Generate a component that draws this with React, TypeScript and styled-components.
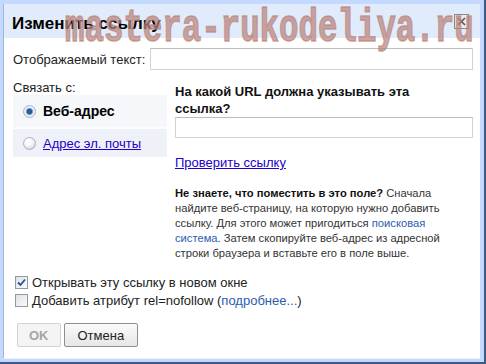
import styled, { createGlobalStyle } from 'styled-components'

const Global = createGlobalStyle`
  html, body {
    margin: 0;
    padding: 0;
    background: #ffffff;
  }
  body {
    font-family: "Liberation Sans", Arial, sans-serif;
    color: #222;
  }
`

const Frame = styled.div`
  width: 486px;
  height: 364px;
  box-sizing: border-box;
  background: #c3d9ff;
  border-right: 2px solid #3d5a80;
  border-bottom: 2px solid #3d5a80;
  padding: 4px 4px 3px 3px;
  display: flex;
`

const Dialog = styled.div`
  position: relative;
  flex: 1;
  display: flex;
  flex-direction: column;
  background: #fff;
  border-left: 1px solid #9fb4d6;
  border-bottom: 1px solid #eef3fb;
  overflow: hidden;
`

const TitleBar = styled.div`
  height: 34px;
  background: #e0ecfb;
  display: flex;
  align-items: center;
  justify-content: space-between;
  padding: 0 8px 0 8px;
`

const Title = styled.h1`
  margin: 0;
  font-size: 17px;
  font-weight: 700;
  color: #000;
  position: relative;
  top: 3px;
`

const CloseButton = styled.div`
  width: 13px;
  height: 13px;
  border: 1px solid #8a8a8a;
  background: #ececec;
  display: flex;
  align-items: center;
  justify-content: center;
  margin-right: 3px;
`

const Watermark = styled.div`
  position: absolute;
  left: 61px;
  top: -2px;
  font-family: "Liberation Mono", "DejaVu Sans Mono", monospace;
  font-weight: 700;
  font-size: 47px;
  color: rgba(186, 132, 124, 0.72);
  -webkit-text-stroke: 1.5px rgba(186, 132, 124, 0.72);
  transform: scaleX(0.69);
  transform-origin: left top;
  white-space: nowrap;
  pointer-events: none;
`

const Body = styled.div`
  flex: 1;
  display: flex;
  flex-direction: column;
  padding: 10px 7px 0 9px;
  font-size: 13px;
`

const FieldRow = styled.div`
  display: flex;
  align-items: center;
  gap: 5px;
`

const TextInput = styled.div`
  flex: 1;
  height: 20px;
  border: 1px solid #d3d3d3;
  border-top-color: #bdbdbd;
  background: #fff;
`

const Columns = styled.div`
  display: grid;
  grid-template-columns: 154px 1fr;
  column-gap: 6px;
  margin-top: 10px;
`

const LeftCol = styled.div`
  display: flex;
  flex-direction: column;
`

const Label = styled.div`
  color: #222;
  line-height: 15px;
`

const Tabs = styled.div`
  background: #eef2f8;
  display: flex;
  flex-direction: column;
`

const Tab = styled.div<{ $active?: boolean }>`
  height: ${({ $active }) => ($active ? 32 : 28)}px;
  display: flex;
  align-items: center;
  gap: 7px;
  padding-left: 10px;
  background: ${({ $active }) => ($active ? '#f5f7fb' : '#eef2f8')};
  border-bottom: ${({ $active }) => ($active ? '2px solid #fbfcfe' : 'none')};
  font-size: ${({ $active }) => ($active ? 14 : 13)}px;
  font-weight: ${({ $active }) => ($active ? 700 : 400)};
  color: #000;
`

const Radio = styled.span<{ $checked?: boolean }>`
  width: 11px;
  height: 11px;
  border-radius: 50%;
  border: 1px solid #a6b4c4;
  background: ${({ $checked }) =>
    $checked
      ? 'radial-gradient(circle at 50% 50%, #2b5c99 0 2.5px, #6f9bd0 3px, #e4e9ef 4px, #f8f8f8 6px)'
      : 'radial-gradient(circle at 40% 35%, #ffffff 0 2px, #e6e8ea 6px, #d4d7db 7px)'};
  flex: none;
`

const Link = styled.a`
  color: #2200cc;
  text-decoration: underline;
  cursor: pointer;
`

const SoftLink = styled.a`
  color: #2a5db0;
  text-decoration: none;
`

const RightCol = styled.div`
  display: flex;
  flex-direction: column;
  padding-top: 3px;
  padding-left: 2px;
`

const Question = styled.div`
  font-weight: 700;
  font-size: 13px;
  line-height: 17px;
  color: #111;
  max-width: 255px;
`

const UrlInput = styled(TextInput)`
  flex: none;
  height: 19px;
`

const CheckLink = styled.div`
  margin-top: 17px;
  font-size: 13px;
  line-height: 15px;
`

const Help = styled.p`
  margin: 16px 0 0;
  max-width: 274px;
  font-size: 11.2px;
  line-height: 15px;
  color: #333;
  b {
    color: #111;
  }
`

const Options = styled.div`
  display: flex;
  flex-direction: column;
  gap: 3px;
  margin-top: 14px;
  padding-left: 2px;
`

const Option = styled.label`
  display: flex;
  align-items: center;
  gap: 4px;
  height: 15px;
  font-size: 13px;
  color: #222;
`

const Box = styled.span`
  width: 11px;
  height: 11px;
  border: 1px solid #8e9aa8;
  background: linear-gradient(135deg, #dfe2e6, #fafafa);
  display: flex;
  align-items: center;
  justify-content: center;
  flex: none;
`

const Buttons = styled.div`
  display: flex;
  gap: 3px;
  margin-top: 15px;
  padding-left: 4px;
`

const Button = styled.div<{ $disabled?: boolean }>`
  height: 22px;
  padding: 0 ${({ $disabled }) => ($disabled ? 11 : 13)}px;
  border: 1px solid ${({ $disabled }) => ($disabled ? '#d2d2d2' : '#8f8f8f')};
  border-radius: 2px;
  background: ${({ $disabled }) =>
    $disabled ? '#f4f4f4' : 'linear-gradient(#fafafa, #e6e6e6)'};
  color: ${({ $disabled }) => ($disabled ? '#a6a6a6' : '#222')};
  font-weight: ${({ $disabled }) => ($disabled ? 700 : 400)};
  font-size: 13px;
  display: flex;
  align-items: center;
`

export default function App() {
  return (
    <>
      <Global />
      <Frame>
        <Dialog>
          <TitleBar>
            <Title>Изменить ссылку</Title>
            <CloseButton>
              <svg width="9" height="9" viewBox="0 0 9 9">
                <path d="M1 1L8 8M8 1L1 8" stroke="#555" strokeWidth="1.6" />
              </svg>
            </CloseButton>
          </TitleBar>
          <Watermark>mastera-rukodeliya.ru</Watermark>
          <Body>
            <FieldRow>
              <span>Отображаемый текст:</span>
              <TextInput />
            </FieldRow>
            <Columns>
              <LeftCol>
                <Label>Связать с:</Label>
                <Tabs>
                  <Tab $active>
                    <Radio $checked />
                    Веб-адрес
                  </Tab>
                  <Tab>
                    <Radio />
                    <Link>Адрес эл. почты</Link>
                  </Tab>
                </Tabs>
              </LeftCol>
              <RightCol>
                <Question>На какой URL должна указывать эта ссылка?</Question>
                <UrlInput />
                <CheckLink>
                  <Link>Проверить ссылку</Link>
                </CheckLink>
                <Help>
                  <b>Не знаете, что поместить в это поле?</b> Сначала найдите
                  веб-страницу, на которую нужно добавить ссылку. Для этого может
                  пригодиться <SoftLink>поисковая система</SoftLink>. Затем
                  скопируйте веб-адрес из адресной строки браузера и вставьте его
                  в поле выше.
                </Help>
              </RightCol>
            </Columns>
            <Options>
              <Option>
                <Box>
                  <svg width="9" height="9" viewBox="0 0 9 9">
                    <path d="M1 4.5L3.5 7L8 1.5" stroke="#2b4f9a" strokeWidth="1.8" fill="none" />
                  </svg>
                </Box>
                <span>Открывать эту ссылку в новом окне</span>
              </Option>
              <Option>
                <Box />
                <span>
                  Добавить атрибут rel=nofollow (<SoftLink>подробнее...</SoftLink>)
                </span>
              </Option>
            </Options>
            <Buttons>
              <Button $disabled>OK</Button>
              <Button>Отмена</Button>
            </Buttons>
          </Body>
        </Dialog>
      </Frame>
    </>
  )
}
